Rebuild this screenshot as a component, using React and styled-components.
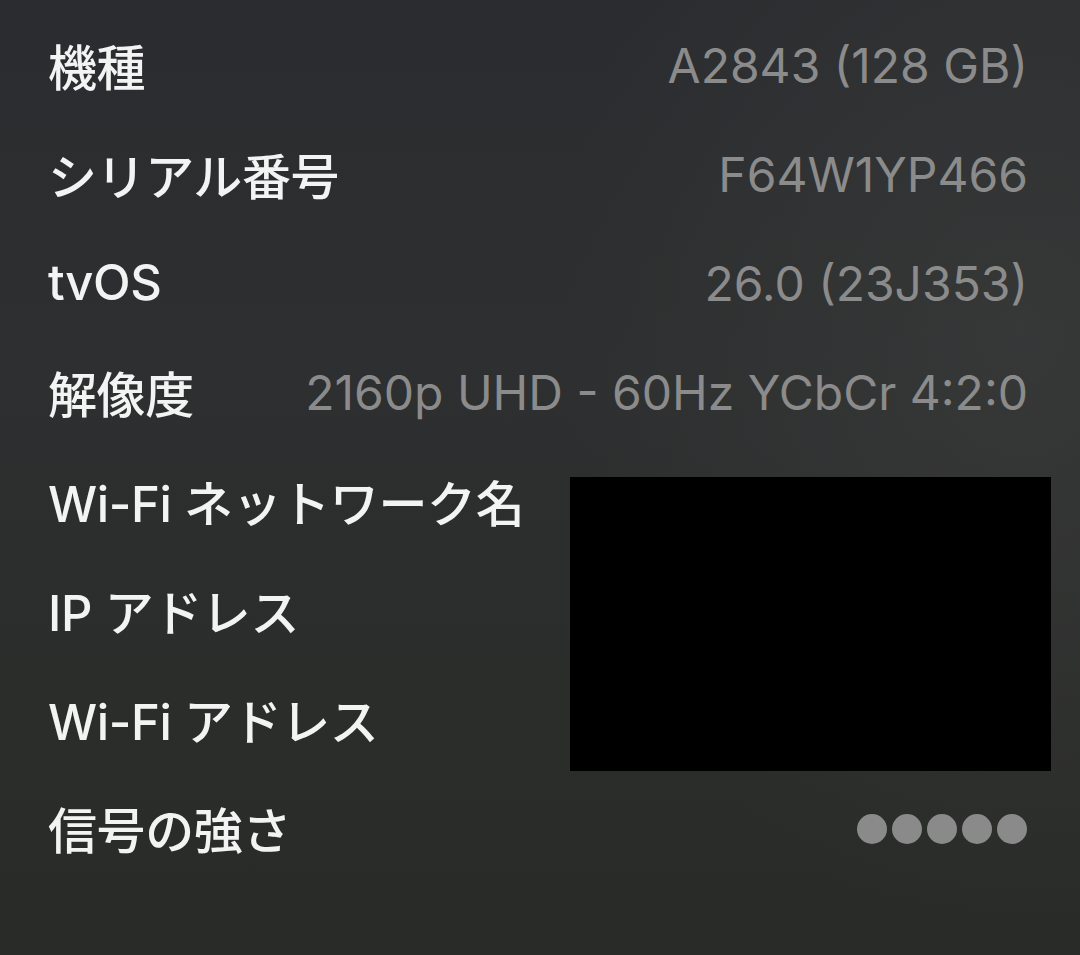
import styled, { createGlobalStyle } from "styled-components";

const GlobalStyle = createGlobalStyle`
  html, body {
    margin: 0;
    padding: 0;
    background: #2b2d2e;
  }
  body {
    font-family: Inter, "Noto Sans CJK JP", sans-serif;
  }
`;

const rows = [
  { label: "機種", value: "A2843 (128 GB)" },
  { label: "シリアル番号", value: "F64W1YP466" },
  { label: "tvOS", value: "26.0 (23J353)" },
  { label: "解像度", value: "2160p UHD - 60Hz YCbCr 4:2:0" },
  { label: "Wi-Fi ネットワーク名", value: "" },
  { label: "IP アドレス", value: "" },
  { label: "Wi-Fi アドレス", value: "" },
  { label: "信号の強さ", signal: 5 },
];

const App = () => {
  return (
    <>
      <GlobalStyle />
      <Screen>
        <List>
          {rows.map((row) => (
            <Row key={row.label}>
              <Label>{row.label}</Label>
              {row.signal ? (
                <Dots>
                  {Array.from({ length: row.signal }).map((_, i) => (
                    <Dot key={i} />
                  ))}
                </Dots>
              ) : (
                <Value>{row.value}</Value>
              )}
            </Row>
          ))}
        </List>
        <Redaction />
      </Screen>
    </>
  );
};

// Styled Components

const Screen = styled.div`
  position: relative;
  width: 1080px;
  height: 955px;
  overflow: hidden;
  background:
    radial-gradient(ellipse 460px 600px at 1020px 330px, rgba(66, 66, 64, 0.45), rgba(66, 66, 64, 0) 100%),
    linear-gradient(180deg, #2a2c2f 0%, #2d2f30 40%, #2b2d2b 75%, #292b29 100%);
`;

const List = styled.div`
  display: flex;
  flex-direction: column;
  padding: 11px 52px 0 48px;
`;

const Row = styled.div`
  height: 109px;
  display: flex;
  align-items: center;
  justify-content: space-between;
`;

const Label = styled.span`
  color: #f3f3f3;
  font-size: 49px;
  font-weight: 500;
  letter-spacing: -0.4px;
  white-space: nowrap;
  margin-top: -2px;
`;

const Value = styled.span`
  color: #8b8b8b;
  font-size: 48px;
  font-weight: 400;
  letter-spacing: 0;
  white-space: nowrap;
`;

const Dots = styled.div`
  display: flex;
  gap: 5px;
  margin-right: 1px;
`;

const Dot = styled.span`
  width: 30px;
  height: 30px;
  border-radius: 50%;
  background: #8a8a8a;
`;

const Redaction = styled.div`
  position: absolute;
  left: 570px;
  top: 477px;
  width: 481px;
  height: 294px;
  background: #000;
`;

export default App;
